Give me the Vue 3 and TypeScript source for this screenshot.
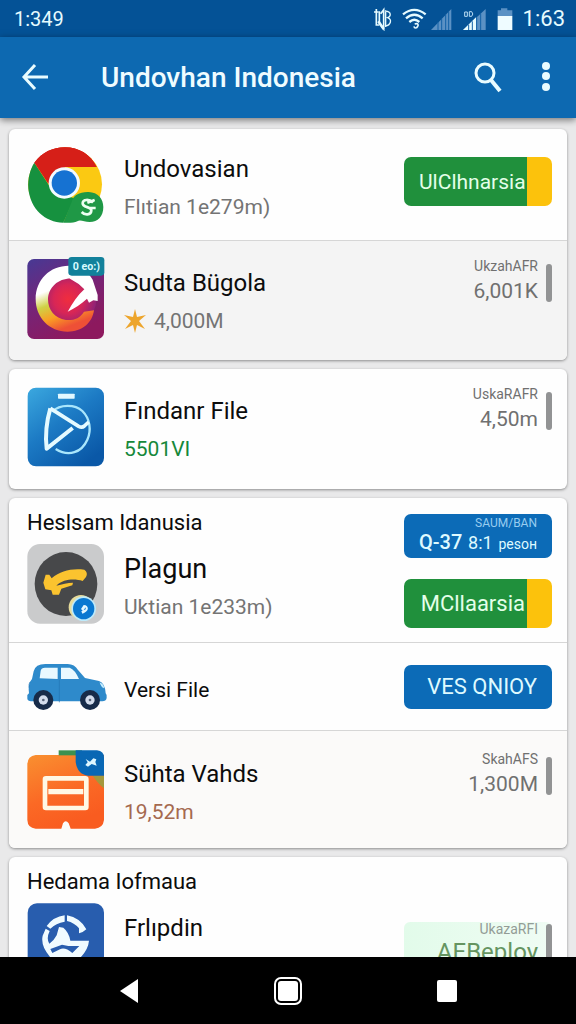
<script setup lang="ts">
interface Stat {
  label: string
  value: string
}

interface Entry {
  id: string
  icon: string
  title: string
  size?: 'large' | 'small'
  detail?: string
  tone?: 'green' | 'brown'
  star?: boolean
  heading?: string
  tall?: 'first' | 'mid' | 'last' | 'short'
  shade?: 'grey' | 'warm'
  stat?: Stat
  split?: string
  offer?: boolean
  action?: string
  pale?: Stat
}

const cards: Entry[][] = [
  [
    { id: 'a', icon: 'chrome', title: 'Undovasian', detail: 'Flıtian 1e279m)', tall: 'first', split: 'UlClhnarsia' },
    { id: 'b', icon: 'gauge', title: 'Sudta Bügola', detail: '4,000M', star: true, tall: 'mid', shade: 'grey', stat: { label: 'UkzahAFR', value: '6,001K' } },
  ],
  [
    { id: 'c', icon: 'play', title: 'Fındanr File', detail: '5501VI', tone: 'green', tall: 'mid', stat: { label: 'UskaRAFR', value: '4,50m' } },
  ],
  [
    { id: 'd', icon: 'bird', heading: 'Heslsam Idanusia', title: 'Plagun', size: 'large', detail: 'Uktian 1e233m)', offer: true, split: 'MCllaarsia' },
    { id: 'e', icon: 'car', title: 'Versi File', size: 'small', tall: 'short', action: 'VES QNIOY' },
    { id: 'f', icon: 'card', title: 'Sühta Vahds', detail: '19,52m', tone: 'brown', tall: 'last', shade: 'warm', stat: { label: 'SkahAFS', value: '1,300M' } },
  ],
  [
    { id: 'g', icon: 'globe', heading: 'Hedama Iofmaua', title: 'Frlıpdin', detail: 'Uktdiant', pale: { label: 'UkazaRFI', value: 'AEBeploy' } },
  ],
]
</script>

<template>
  <div class="app">
    <div class="status">
      <span>1:349</span>
      <div class="status-icons">
        <svg viewBox="44 12 60 72" width="20" height="24" aria-hidden="true">
          <g fill="none" stroke="#e6fbff" stroke-width="5">
            <path d="M47 27H60M54 18V66H63M63 25V60L76 78V20L67 32" />
            <path d="M60 55L76 78" stroke-width="8" />
            <path d="M82 22V72M80 24C101 26 98 40 88 44C102 50 98 66 80 70" stroke-width="4" />
          </g>
        </svg>
        <div class="radio">
          <svg viewBox="134 12 75 72" width="25" height="24" aria-hidden="true">
            <g fill="none" stroke="#e6fbff" stroke-width="7">
              <path d="M137 34Q171 7 205 34" />
              <path d="M146 46Q171 25 196 46" />
              <path d="M156 57Q171 44 186 57" />
              <path d="M172 63C183 60 184 65 181 70C178 77 171 76 170 70" stroke-width="5" />
            </g>
          </svg>
          <svg viewBox="218 12 69 72" width="23" height="24" aria-hidden="true">
            <path d="M221 81L282 18V81Z" fill="#5b91c4" />
            <path d="M242 57V81M253 47V81M265 34V81M274 26V81" stroke="#1260a6" stroke-width="3" />
          </svg>
        </div>
        <svg viewBox="311 12 75 72" width="25" height="24" aria-hidden="true">
          <path d="M314 81L382 18V81Z" fill="#5b91c4" />
          <path d="M314 81L353 43V81Z" fill="#e6fbff" />
          <path d="M331 65V81M342 55V81M355 43V81M367 32V81" stroke="#1260a6" stroke-width="3" />
          <path d="M319 27V40H327V27ZM333 26H340Q347 33 340 40H333Z" fill="none" stroke="#b9dcf4" stroke-width="3" />
        </svg>
        <svg viewBox="410 12 54 72" width="18" height="24" aria-hidden="true">
          <path d="M415 22H425V16H444V22H459V40H415Z" fill="#5b91c4" />
          <path d="M415 39H459V81H415Z" fill="#effcff" />
        </svg>
        <span class="clock">1:63</span>
      </div>
    </div>

    <header class="toolbar">
      <button class="tool" type="button" aria-label="Back">
        <svg viewBox="0 0 30 30" width="30" height="30">
          <path d="M28 14H4M15 2L4 14L15 26" fill="none" stroke="#e9fcff" stroke-width="3" />
        </svg>
      </button>
      <h1>Undovhan Indonesia</h1>
      <button class="tool" type="button" aria-label="Search">
        <svg viewBox="0 0 32 34" width="32" height="34">
          <circle cx="14" cy="12" r="9" fill="none" stroke="#e9fcff" stroke-width="3" />
          <path d="M20 19L29 30" stroke="#e9fcff" stroke-width="4" />
        </svg>
      </button>
      <button class="tool" type="button" aria-label="More options">
        <svg viewBox="0 0 10 32" width="10" height="32">
          <g fill="#e9fcff">
            <circle cx="6" cy="4" r="4" /><circle cx="6" cy="14" r="4" /><circle cx="6" cy="25" r="4" />
          </g>
        </svg>
      </button>
    </header>

    <main>
      <ul v-for="(card, n) in cards" :key="n" class="card">
        <li v-for="item in card" :key="item.id" class="row" :class="[item.heading ? 'section' : item.tall, item.shade]">
          <div class="left">
            <h2 v-if="item.heading">{{ item.heading }}</h2>
            <div class="entry">
              <svg v-if="item.icon === 'chrome'" class="icon" viewBox="81 39 231 240" aria-hidden="true">
                <circle cx="195" cy="157" r="111" fill="#fbc912" />
                <path d="M195 157L103 92C127 61 157 46 195 46C236 46 272 67 290 105H195Z" fill="#d61f18" />
                <path d="M103 92L160 180L223 199L190 272C135 270 92 232 85 170C83 139 90 112 103 92Z" fill="#16913f" />
                <path d="M103 92L145 155L160 130L195 105H290C272 67 236 46 195 46C157 46 127 61 103 92Z" fill="#d61f18" />
                <path d="M216 207C220 190 239 179 266 180C294 181 310 200 310 225C310 252 294 270 269 270C252 270 241 262 232 268C222 273 205 273 190 272Z" fill="#1f9846" />
                <circle cx="193" cy="153" r="47" fill="#f4fbff" />
                <circle cx="193" cy="153" r="38" fill="#1672d2" />
                <path d="M279 212C267 200 249 202 248 213C247 229 275 222 274 236C273 250 254 250 245 240M262 212L284 204M265 228H287" fill="none" stroke="#edfff2" stroke-width="8" />
              </svg>

              <svg v-else-if="item.icon === 'gauge'" class="icon" viewBox="81 384 231 240" aria-hidden="true">
                <defs>
                  <linearGradient id="gauge-bg" x1="0" y1="0" x2="0.5" y2="1">
                    <stop offset="0" stop-color="#473994" /><stop offset="0.5" stop-color="#742579" /><stop offset="1" stop-color="#8d195e" />
                  </linearGradient>
                  <radialGradient id="gauge-core" cx="0.5" cy="0.5" r="0.5">
                    <stop offset="0" stop-color="#f02d3e" /><stop offset="0.5" stop-color="#d82656" /><stop offset="1" stop-color="#8f2277" />
                  </radialGradient>
                  <linearGradient id="gauge-ring" x1="0" y1="0" x2="0.35" y2="1">
                    <stop offset="0.4" stop-color="#fff" /><stop offset="0.6" stop-color="#cfd246" /><stop offset="0.8" stop-color="#fa9e24" /><stop offset="1" stop-color="#ee5036" />
                  </linearGradient>
                </defs>
                <rect x="82" y="384" width="230" height="240" rx="20" fill="url(#gauge-bg)" />
                <circle cx="204" cy="504" r="85" fill="url(#gauge-core)" />
                <path d="M226 406C160 395 107 440 107 504C107 560 148 602 203 602C246 602 277 576 282 538L252 542C240 562 221 569 198 567C164 563 144 536 144 505C145 466 180 438 221 443L238 433Z" fill="url(#gauge-ring)" />
                <path d="M212 407C241 406 265 422 278 446L293 492V510L280 508L267 515L261 503C244 518 224 532 203 542C217 517 233 493 253 475L236 459L210 443Z" fill="#fff" />
                <rect x="205" y="378" width="108" height="56" rx="10" fill="#12819b" />
                <text x="259" y="417" text-anchor="middle" class="badge-text">0 eo:)</text>
              </svg>

              <svg v-else-if="item.icon === 'play'" class="icon" viewBox="81 64 231 240" aria-hidden="true">
                <defs>
                  <linearGradient id="play-bg" x1="0" y1="0" x2="0.7" y2="1">
                    <stop offset="0" stop-color="#3ba8df" /><stop offset="0.5" stop-color="#1c7ac4" /><stop offset="1" stop-color="#0a58a7" />
                  </linearGradient>
                </defs>
                <rect x="83" y="66" width="229" height="236" rx="25" fill="url(#play-bg)" />
                <rect x="174" y="84" width="50" height="15" rx="2" fill="#e2f8ff" />
                <path d="M157 138C180 115 225 116 247 136C270 159 275 193 262 222C245 260 207 275 167 250" fill="none" stroke="#a9e6fc" stroke-width="7" />
                <path d="M151 128L236 182Q246 187 253 181L266 169" fill="none" stroke="#e5faff" stroke-width="11" />
                <path d="M151 128Q133 189 140 249L218 187" fill="none" stroke="#e5faff" stroke-width="12" stroke-linejoin="round" />
              </svg>

              <svg v-else-if="item.icon === 'bird'" class="icon" viewBox="81 148 231 240" aria-hidden="true">
                <rect x="82" y="148" width="230" height="239" rx="38" fill="#cacbcc" />
                <ellipse cx="198" cy="268" rx="94" ry="96" fill="#47484a" />
                <path d="M130 264L137 240H148L155 251C182 228 213 221 253 225Q265 234 258 247L248 259C225 252 191 252 169 273C186 269 203 264 219 264L217 272L184 282L177 300H158L154 287L136 284Z" fill="#fbc32f" />
                <circle cx="243" cy="338" r="37" fill="#e7dc9c" />
                <circle cx="251" cy="342" r="37" fill="#bdeafb" />
                <circle cx="251" cy="342" r="32" fill="#0a78d1" />
                <path d="M257 332C270 340 262 353 247 357L244 350L257 344V338L249 349L243 343L251 331Z" fill="#e4f7ff" />
              </svg>

              <svg v-else-if="item.icon === 'car'" class="icon car" viewBox="81 500 240 144" aria-hidden="true">
                <path d="M101 525Q106 503 136 503H203Q224 503 234 521L255 545L297 554Q315 560 317 591Q322 596 320 605Q318 615 307 615H99Q83 615 82 607V596L87 591Q83 562 96 548Z" fill="#2e8acb" />
                <path d="M122 523Q124 514 135 514H173V548L119 546ZM183 514H209Q225 520 237 548H183Z" fill="#e9f9ff" />
                <path d="M178 550V618M90 557Q86 562 87 574" fill="none" stroke="#2475b5" stroke-width="2" />
                <path d="M299 558Q313 564 312 576Q302 572 299 558Z" fill="#c5edff" />
                <circle cx="130" cy="611" r="30" fill="#172b49" /><circle cx="270" cy="611" r="30" fill="#172b49" />
                <circle cx="130" cy="611" r="14" fill="#d3dcec" /><circle cx="270" cy="611" r="14" fill="#d3dcec" />
                <circle cx="130" cy="611" r="4" fill="#59657a" /><circle cx="270" cy="611" r="4" fill="#59657a" />
              </svg>

              <svg v-else-if="item.icon === 'card'" class="icon" viewBox="81 40 231 240" aria-hidden="true">
                <defs>
                  <linearGradient id="card-bg" x1="0" y1="0" x2="0.4" y2="1">
                    <stop offset="0" stop-color="#f99030" /><stop offset="0.6" stop-color="#fb6925" /><stop offset="1" stop-color="#f95c20" />
                  </linearGradient>
                </defs>
                <path d="M107 55H312V250Q309 274 285 276H212L206 260Q197 248 189 260L184 276H107Q83 274 82 250V82Q83 58 107 55Z" fill="url(#card-bg)" />
                <path d="M176 41H246V56H176Z" fill="#3d9150" />
                <path d="M278 117H312V155Q296 143 278 117Z" fill="#a4983d" />
                <path d="M227 41H291Q312 43 312 63V117H265Q231 113 227 75Z" fill="#0967b4" />
                <path d="M257 67L270 75L280 65L289 68L286 76L290 87L275 82L264 90L256 85L263 77Z" fill="#dff7ff" />
                <rect x="135" y="125" width="124" height="89" rx="3" fill="none" stroke="#fff8e5" stroke-width="14" />
                <path d="M145 165H250" stroke="#fff8e5" stroke-width="16" />
              </svg>

              <svg v-else class="icon" viewBox="81 162 231 240" aria-hidden="true">
                <rect x="83" y="163" width="229" height="238" rx="28" fill="#285dae" />
                <g fill="#f0fbff">
                  <path d="M140 231Q161 203 194 199V218Q168 222 151 239Z" />
                  <path d="M201 199Q240 206 259 241L248 249L237 253V238Q223 221 201 216Z" />
                  <path d="M137 239L149 246Q138 269 148 284Q162 275 170 259L177 234L190 236Q207 250 211 275H267Q265 300 242 325Q198 361 151 325Q121 291 128 260ZM151 300L157 312L180 301Q194 293 217 312L238 291H205L186 287Z" fill-rule="evenodd" />
                </g>
              </svg>

              <div class="words">
                <h3 :class="item.size">{{ item.title }}</h3>
                <p v-if="item.detail" :class="item.tone">
                  <svg v-if="item.star" viewBox="0 0 22 24" width="22" height="24" aria-hidden="true">
                    <path d="M11 0L13 8L22 6L15 12L21 20L13 16L11 24L9 16L1 20L7 12L0 6L9 8Z" fill="#eda52c" />
                  </svg>
                  {{ item.detail }}
                </p>
              </div>
            </div>
          </div>

          <div v-if="item.stat" class="stat">
            <div>
              <small>{{ item.stat.label }}</small>
              <strong>{{ item.stat.value }}</strong>
            </div>
            <i class="bar"></i>
          </div>
          <div v-else-if="item.pale" class="stat pale">
            <div>
              <small>{{ item.pale.label }}</small>
              <strong>{{ item.pale.value }}</strong>
            </div>
            <i class="bar"></i>
          </div>
          <div v-else class="actions">
            <button v-if="item.offer" class="button offer" type="button">
              <small>SAUM/BAN</small>
              <span class="price"><b>Q-37</b><span>8:1</span><span class="unit">pesoн</span></span>
            </button>
            <button v-if="item.action" class="button" type="button">{{ item.action }}</button>
            <button v-if="item.split" class="button split" type="button">{{ item.split }}</button>
          </div>
        </li>
      </ul>
    </main>

    <nav>
      <button type="button" aria-label="Back">
        <svg viewBox="0 0 20 26" width="20" height="26"><path d="M19 1V25L1 13Z" fill="#fff" /></svg>
      </button>
      <button type="button" aria-label="Home">
        <svg viewBox="0 0 28 28" width="28" height="28">
          <rect x="1" y="1" width="26" height="26" rx="6" fill="none" stroke="#fff" stroke-width="2" />
          <rect x="4" y="4" width="20" height="20" rx="3" fill="#fff" />
        </svg>
      </button>
      <button type="button" aria-label="Recent apps">
        <svg viewBox="0 0 22 24" width="22" height="24"><rect x="1" y="1" width="20" height="22" rx="2" fill="#fff" /></svg>
      </button>
    </nav>
  </div>
</template>

<style>
body {
  margin: 0;
}
</style>

<style scoped>
.app {
  display: flex;
  flex-direction: column;
  height: 100vh;
  background: #e9e9ea;
  color: #0c0c0c;
  font-family: Roboto, "Liberation Sans", sans-serif;
}

h1, h2, h3, p, ul {
  margin: 0;
  padding: 0;
  font-weight: 400;
}

button {
  padding: 0;
  border: 0;
  background: none;
  font-family: inherit;
  cursor: pointer;
}

svg {
  display: block;
  flex: none;
}

.status {
  display: flex;
  align-items: center;
  justify-content: space-between;
  height: 37px;
  padding: 0 11px 0 14px;
  background: #045296;
  color: #e6fbff;
  font-size: 20px;
}

.status-icons {
  display: flex;
  align-items: center;
  gap: 9px;
}

.radio {
  display: flex;
  gap: 3px;
}

.clock {
  font-size: 22px;
}

.toolbar {
  position: relative;
  display: flex;
  align-items: center;
  flex: none;
  height: 81px;
  padding: 0 9px 0 13px;
  background: #0d69b1;
  box-shadow: 0 2px 7px rgba(0, 0, 0, 0.5);
  color: #effcff;
}

.toolbar h1 {
  flex: 1;
  padding-left: 44px;
  font-size: 28px;
  font-weight: 500;
}

.tool {
  display: flex;
  align-items: center;
  justify-content: center;
  width: 44px;
  height: 48px;
}

.tool + .tool {
  margin-left: 14px;
}

main {
  flex: 1;
  min-height: 0;
  overflow-y: auto;
  scrollbar-width: none;
  padding: 11px 9px 0;
}

.card {
  margin-bottom: 9px;
  overflow: hidden;
  border-radius: 6px;
  background: #fefefe;
  box-shadow: 0 1px 3px rgba(0, 0, 0, 0.4);
  list-style: none;
}

.row {
  display: flex;
  justify-content: space-between;
  box-sizing: border-box;
  padding: 0 15px 0 18px;
}

.row + .row {
  border-top: 1px solid #d6d6d6;
}

.first {
  min-height: 111px;
}

.mid {
  min-height: 120px;
}

.short {
  min-height: 88px;
}

.last {
  min-height: 118px;
}

.grey {
  background: #f4f4f4;
}

.warm {
  background: #fbfaf9;
}

.left {
  display: flex;
  flex-direction: column;
  justify-content: center;
}

.mid .left {
  padding-bottom: 4px;
}

.section {
  padding-bottom: 14px;
}

.section .left {
  justify-content: flex-start;
  padding-top: 11px;
}

h2 {
  margin-bottom: 7px;
  font-size: 22px;
  line-height: 28px;
}

.entry {
  display: flex;
  align-items: center;
  gap: 20px;
}

.section .entry {
  align-items: flex-start;
}

.icon {
  width: 77px;
  height: 80px;
  overflow: visible;
}

.icon.car {
  width: 80px;
  height: 48px;
  margin-right: -3px;
}

.badge-text {
  fill: #d8fbff;
  font-size: 32px;
  font-weight: 700;
}

.words {
  padding-top: 6px;
}

h3 {
  font-size: 24px;
  line-height: 38px;
}

h3.large {
  font-size: 27px;
}

h3.small {
  font-size: 21px;
}

p {
  display: flex;
  align-items: center;
  gap: 8px;
  color: #747474;
  font-size: 21px;
  line-height: 38px;
}

.green {
  color: #16883a;
}

.brown {
  color: #a5694f;
}

.stat {
  display: flex;
  gap: 8px;
  padding-top: 15px;
  color: #707070;
  text-align: right;
}

.stat small,
.stat strong {
  display: block;
  font-weight: 400;
}

.stat small {
  font-size: 14px;
  line-height: 20px;
}

.stat strong {
  font-size: 21px;
  line-height: 30px;
}

.bar {
  width: 6px;
  height: 38px;
  margin-top: 8px;
  border-radius: 3px;
  background: #929394;
}

.last .stat {
  padding-top: 18px;
}

.pale {
  box-sizing: border-box;
  justify-content: flex-end;
  width: 148px;
  height: 50px;
  margin-top: 65px;
  padding-top: 0;
  border-radius: 6px;
  background: linear-gradient(90deg, #e2fbea, #f0fcf4);
}

.pale small {
  color: #939c96;
  line-height: 14px;
}

.pale strong {
  color: #659460;
  font-size: 24px;
  line-height: 32px;
}

.pale .bar {
  margin-top: 2px;
}

.actions {
  display: flex;
  flex-direction: column;
  justify-content: center;
  gap: 21px;
}

.first .actions {
  padding-bottom: 6px;
}

.section .actions {
  justify-content: flex-start;
  padding-top: 16px;
}

.button {
  box-sizing: border-box;
  width: 148px;
  height: 44px;
  padding: 0 15px;
  border-radius: 7px;
  background: #0c6bb7;
  color: #dffaff;
  font-size: 22px;
  text-align: right;
  white-space: nowrap;
}

.split {
  height: 49px;
  padding-right: 27px;
  background: linear-gradient(90deg, #20903c 0 calc(100% - 25px), #fcc20c calc(100% - 25px));
  color: #e4ffe9;
  font-size: 21px;
}

.section .split {
  font-size: 22px;
}

.offer small {
  display: block;
  color: #98cdf0;
  font-size: 12px;
  line-height: 14px;
}

.price {
  display: flex;
  align-items: baseline;
  justify-content: space-between;
  font-size: 18px;
  line-height: 24px;
}

.price b {
  font-size: 20px;
  font-weight: 500;
}

.unit {
  font-size: 14px;
}

nav {
  display: flex;
  justify-content: center;
  flex: none;
  height: 67px;
  background: #000;
}

nav button {
  display: flex;
  align-items: center;
  justify-content: center;
  width: 159px;
}
</style>
